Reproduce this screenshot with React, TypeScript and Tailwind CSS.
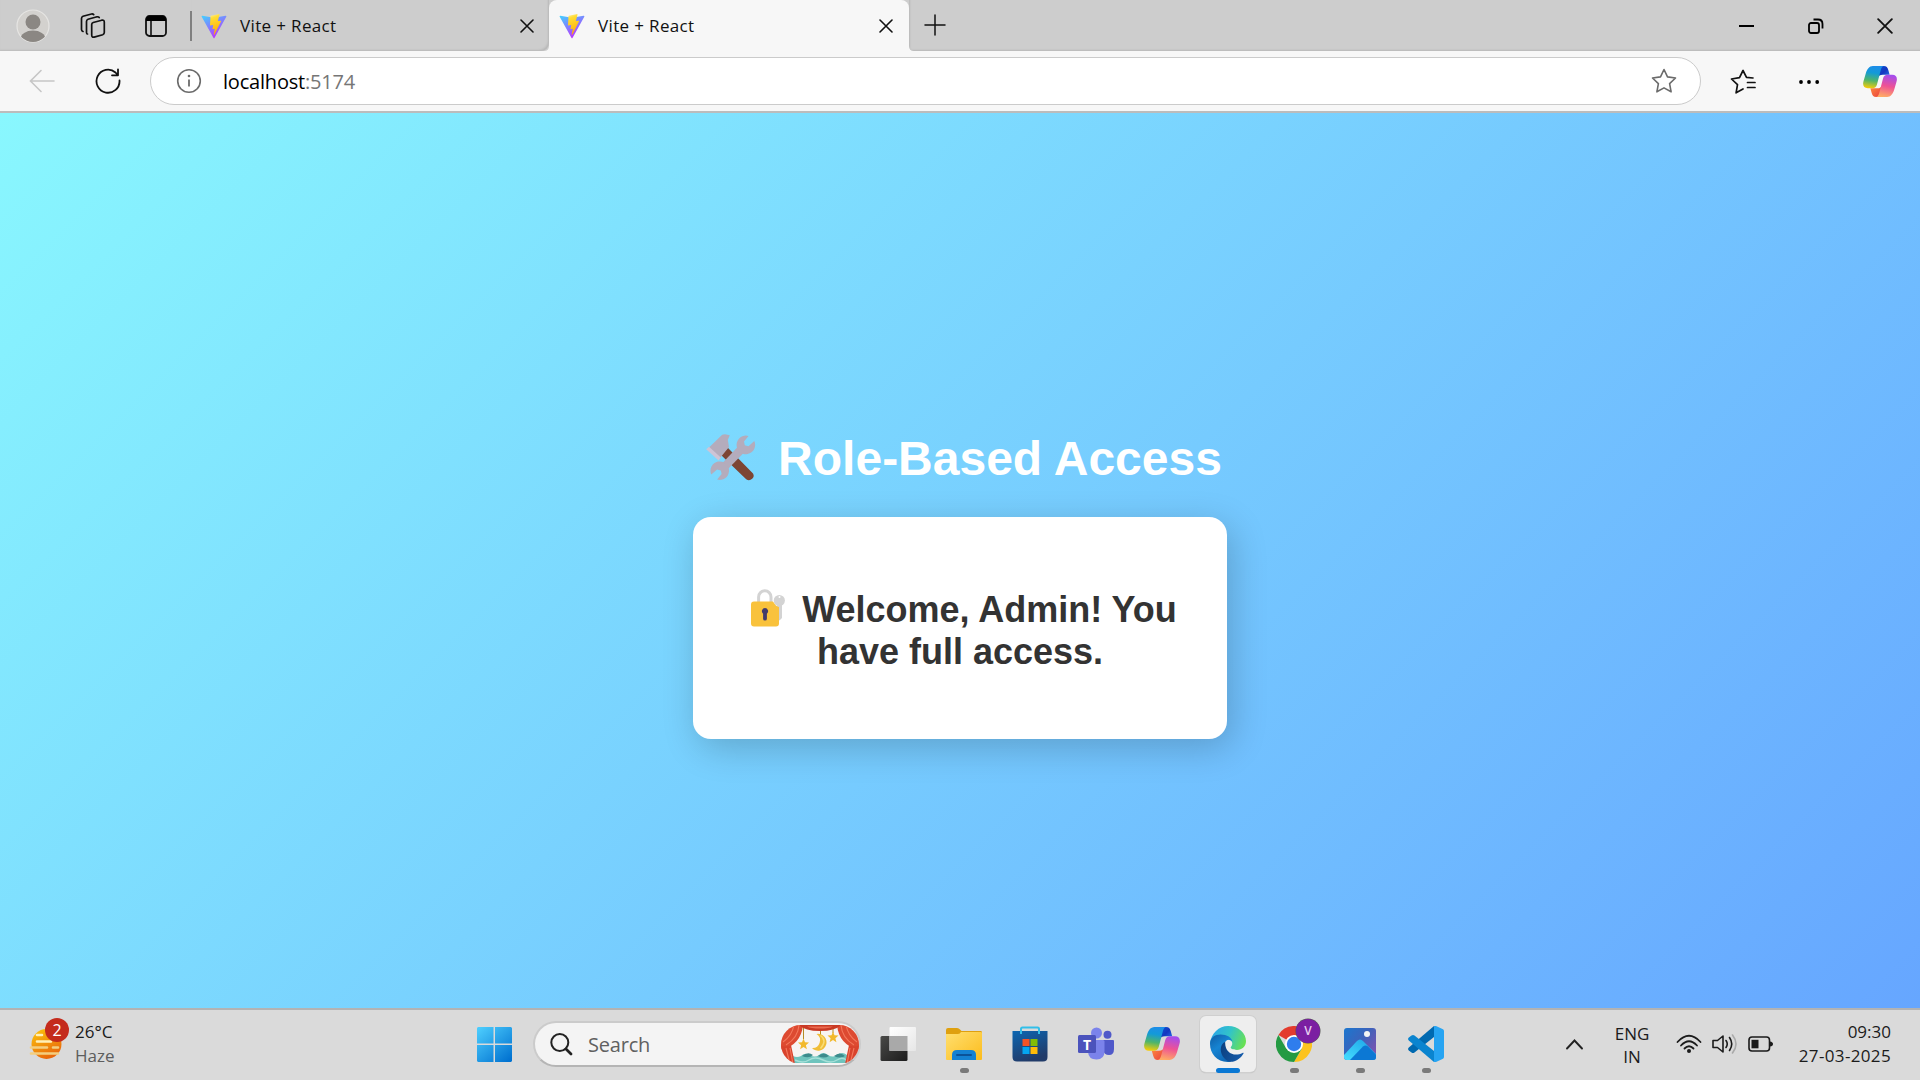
import React from "react";

const UI = "font-['Open_Sans','Noto_Sans',sans-serif]";

function Vite() {
  return (
    <svg width="26" height="26" viewBox="0 0 26 26" className="shrink-0">
      <defs>
        <linearGradient id="va" x1="0" y1="0" x2=".55" y2="1"><stop stopColor="#41d1ff" /><stop offset="1" stopColor="#bd34fe" /></linearGradient>
        <linearGradient id="vb" x1=".4" y1="0" x2=".6" y2="1"><stop stopColor="#ffea83" /><stop offset=".15" stopColor="#ffdd35" /><stop offset="1" stopColor="#ffa800" /></linearGradient>
      </defs>
      <path d="M25.3 3.8 13.6 24.8a.7.7 0 0 1-1.2 0L.7 3.8a.7.7 0 0 1 .7-1l11.6 2 11.5-2a.7.7 0 0 1 .8 1Z" fill="url(#va)" />
      <path d="m18.4 1-8.6 1.700a.4.4 0 0 0-.3.3L9 12a.4.4 0 0 0 .5.4l2.3-.5c.3-.1.5.2.4.4l-.7 3.5c0 .2.2.4.4.4l1.500-.5c.3 0 .5.2.4.4l-1.100 5.4c-.1.3.4.5.6.2l6.8-13.500a.4.4 0 0 0-.4-.5l-2.400.4a.4.4 0 0 1-.4-.4l1.600-5.900a.4.4 0 0 0-.1-.4Z" fill="url(#vb)" />
    </svg>
  );
}

function Copilot({ w, h }: { w: number; h: number }) {
  return (
    <svg width={w} height={h} viewBox="0 0 36 32" preserveAspectRatio="none" className="shrink-0">
      <defs>
        <linearGradient id="c1" x1=".5" y1="0" x2=".35" y2="1"><stop stopColor="#1d8de8" /><stop offset=".3" stopColor="#139ad8" /><stop offset=".65" stopColor="#4fb56a" /><stop offset="1" stopColor="#f5cc08" /></linearGradient>
        <linearGradient id="c2" x1=".6" y1="0" x2=".4" y2="1"><stop stopColor="#a44dee" /><stop offset=".5" stopColor="#ee5295" /><stop offset="1" stopColor="#ffab65" /></linearGradient>
        <linearGradient id="c3" x1="0" y1="0" x2="1" y2="1"><stop stopColor="#0b55d5" /><stop offset=".5" stopColor="#1436c0" /><stop offset="1" stopColor="#2a7cf0" /></linearGradient>
        <linearGradient id="c4" x1="0" y1="0" x2="1" y2="1"><stop stopColor="#ff8f3f" /><stop offset="1" stopColor="#e93e3e" /></linearGradient>
      </defs>
      <path d="M18 0h4c3 0 4 1.500 4.800 4.200L28.200 9H21c-3 0-4.500 1-5.300 3.500Z" fill="url(#c3)" />
      <path d="M18 32h-4c-3 0-4-1.500-4.800-4.200L7.800 23H15c3 0 4.500-1 5.300-3.500Z" fill="url(#c4)" />
      <path d="M22.500 0H10.500C6.500 0 4.300 3.500 3 7.500L.6 15.500C-.8 20 .8 23 5 23h5c2.600 0 4-1.200 4.800-3.800L18.600 5C19.400 2 20.300 0 22.500 0Z" fill="url(#c1)" />
      <path d="M13.500 32h12c4 0 6.200-3.500 7.500-7.500l2.400-8C36.800 12 35.200 9 31 9h-5c-2.600 0-4 1.200-4.800 3.800L17.400 27c-.8 3-1.700 5-3.900 5Z" fill="url(#c2)" />
    </svg>
  );
}

function Cross({ s }: { s: number }) {
  return (
    <svg width={s} height={s} viewBox="0 0 14 14" className="shrink-0"><path d="m1 1 12 12M13 1 1 13" stroke="#111" strokeWidth="1.600" strokeLinecap="round" /></svg>
  );
}

function TabBar() {
  return (
    <header className="flex h-[51px] shrink-0 bg-[#cdcdcd]">
      <div className="flex w-[192px] items-center pl-4 shadow-[inset_0_-2px_2px_-1px_#bcbcbc]">
        <svg width="34" height="34" viewBox="0 0 34 34" className="mt-px">
          <defs><clipPath id="av"><circle cx="17" cy="17" r="16" /></clipPath></defs>
          <circle cx="17" cy="17" r="16" fill="#d3d1ce" stroke="#e6e5e3" strokeWidth="1.200" />
          <g clipPath="url(#av)" fill="#8b8783"><circle cx="17" cy="13" r="7.500" /><ellipse cx="17" cy="30" rx="12.500" ry="8.500" /></g>
        </svg>
        <svg width="26" height="26" viewBox="0 0 26 26" fill="none" stroke="#111" strokeWidth="1.700" strokeLinecap="round" className="ml-[30px]">
          <path d="m13.200 9.500 8.500-2.300q2.600-.6 2.600 2v10.300q0 1.600-1.600 2.200l-8.500 2.400q-2.500.6-2.500-2V11.500q0-1.600 1.500-2Z" />
          <path d="M7.500 21q-1 0-1-1.500V8.500q0-1.600 1.500-2.200L17 3.800q1.500-.3 2.200.7" />
          <path d="M3 18.500q-1.500-.5-1.500-2v-11q0-1.500 1.500-2.200L11.500 1q1.500-.2 2.200.6" />
        </svg>
        <svg width="22" height="22" viewBox="0 0 22 22" className="ml-[39px]">
          <rect x="1" y="1" width="20" height="20" rx="3.500" fill="none" stroke="#111" strokeWidth="1.800" />
          <path d="M1 6V4.500A3.500 3.500 0 0 1 4.500 1h13A3.500 3.500 0 0 1 21 4.500V6Z" fill="#000" /><path d="M6 6v15" stroke="#111" strokeWidth="1.600" />
        </svg>
        <div className="ml-[23px] h-[30px] w-[2px] shrink-0 bg-[#808080]" />
      </div>
      <div className="flex w-[357px] items-center rounded-br-lg pl-[9px] pr-[15px] shadow-[inset_-2px_-2px_2px_-1px_#b8b8b8]">
        <Vite />
        <span className="ml-[13px] flex-1 text-[17px] leading-none tracking-[0.350px] text-[#111]">Vite + React</span>
        <Cross s={14} />
      </div>
      <div className="relative flex w-[360px] items-center rounded-t-lg bg-[#f7f7f7] pl-[10px] pr-[16px]">
        <Vite />
        <span className="ml-[13px] flex-1 text-[17px] leading-none tracking-[0.350px] text-[#111]">Vite + React</span>
        <Cross s={14} />
        <svg width="5" height="5" viewBox="0 0 5 5" className="absolute -left-[5px] bottom-0"><path d="M5 0v5H0q5 0 5-5" fill="#f7f7f7" /></svg>
        <svg width="5" height="5" viewBox="0 0 5 5" className="absolute -right-[5px] bottom-0"><path d="M0 0v5h5q-5 0-5-5" fill="#f7f7f7" /></svg>
      </div>
      <div className="flex flex-1 items-center pl-[15px] pr-[27px] shadow-[inset_2px_-2px_2px_-1px_#b8b8b8]">
        <svg width="22" height="22" viewBox="0 0 22 22" className="-mt-[2px]"><path d="M11 1v20M1 11h20" stroke="#111" strokeWidth="1.500" strokeLinecap="round" /></svg>
        <div className="flex-1" />
        <div className="mr-[54px] h-[2px] w-[15px] bg-black" />
        <svg width="16" height="16" viewBox="0 0 16 16" fill="none" stroke="#000" strokeWidth="1.800" className="mr-[53px]"><rect x="1" y="5" width="10" height="10" rx="2" /><path d="M5.500 1.500H10q4.500 0 4.500 4.500v4.500" /></svg>
        <Cross s={16} />
      </div>
    </header>
  );
}

function Toolbar() {
  return (
    <div className="flex h-[62px] shrink-0 items-center border-b-2 border-[#bcbcbc] bg-[#f7f7f7] pl-[29px] pr-[23px]">
      <svg width="26" height="24" viewBox="0 0 26 24" fill="none" stroke="#c6c6c6" strokeWidth="1.600" strokeLinecap="round" className="-mt-px"><path d="M25 12H1.500M12 1.500 1.500 12 12 22.500" /></svg>
      <svg width="26" height="26" viewBox="0 0 26 26" fill="none" stroke="#111" strokeWidth="1.800" strokeLinecap="round" strokeLinejoin="round" className="ml-10"><path d="M24.500 12.500A11.500 11.500 0 1 1 20.500 4.500L23 7.300M23 1.500v5.800h-6" /></svg>
      <div className="ml-[29px] flex h-12 w-[1551px] items-center rounded-full border border-[#cbcbcb] bg-white pl-[25px] pr-[23px]">
        <svg width="26" height="26" viewBox="0 0 26 26" fill="none" stroke="#6b6b6b" strokeWidth="1.600"><circle cx="13" cy="13" r="11.300" /><path d="M13 11.500v7" strokeWidth="1.800" /><circle cx="13" cy="8" r="1.300" fill="#6b6b6b" stroke="none" /></svg>
        <div className="ml-[21px] flex-1 pt-[2px] text-[20px] leading-none tracking-[-0.200px] text-black">localhost<span className="text-[#767676]">:5174</span></div>
        <svg width="26" height="26" viewBox="0 0 26 26" fill="none" stroke="#6b6b6b" strokeWidth="1.600" strokeLinejoin="round"><path d="m13 1.500 3.500 7.400 8 1.100-5.900 5.600 1.500 8.200-7.100-3.900-7.100 3.900 1.500-8.200L1.500 10l8-1.100Z" /></svg>
      </div>
      <svg width="26" height="26" viewBox="0 0 26 26" fill="none" stroke="#111" strokeWidth="1.700" strokeLinecap="round" strokeLinejoin="round" className="ml-[29px] mt-px"><path d="m23 9-6.500-.6L13 1.500 9.500 8.600 1.500 10l6 5.600-1.400 8.200L13 20M17.500 13.500H25M17.500 18.500H25" /></svg>
      <svg width="22" height="6" viewBox="0 0 22 6" className="ml-[42px] mt-px"><circle cx="3" cy="3" r="1.900" /><circle cx="11" cy="3" r="1.900" /><circle cx="19.200" cy="3" r="1.900" /></svg>
      <div className="ml-auto"><Copilot w={34} h={31} /></div>
    </div>
  );
}

function Tools() {
  const jaw = "M42.500 2 38 7.500 38.800 11.200 42.500 12.200 48.300 7A9.300 9.300 0 1 1 42.500 2Z";
  return (
    <svg width="50" height="50" viewBox="0 0 50 50" className="shrink-0">
      <path d="M21.800 13.700 47 39.500q1.800 3-.8 5.300-3 2.700-6 .4L15 21Z" fill="#7d4533" />
      <path d="M16.200.8 19 .2l4.800 1-2 4.500 1.200 7.200L12.800 25.500 3 13.500Z" fill="#b4acbc" />
      <path d="M3 12.800 14.800 23.500l-2.200 3L.2 15.300Z" fill="#cdc4d6" />
      <g fill="#b4acbc">
        <path d="M33.500 11 16 29.500 20.500 36.500 39.500 17Z" />
        <path d={jaw} /><path d={jaw} transform="rotate(180 26.800 23.800)" />
      </g>
    </svg>
  );
}

function LockKey() {
  return (
    <svg width="36" height="39" viewBox="0 0 36 39" className="shrink-0">
      <circle cx="29.300" cy="11.500" r="5.600" fill="#d3d3d3" /><path d="M27 14h5v15l-2.500 2.500-2.500-2Z" fill="#d3d3d3" /><circle cx="29.500" cy="8" r="1" fill="#fff" />
      <path d="M8.600 14V8a6.200 6.200 0 0 1 12.400 0V14" fill="none" stroke="#d3d3d3" strokeWidth="3" />
      <path d="M4 12.500H23q3 5 6 5.500v16.500q0 3-3 3H4q-3 0-3-3v-19q0-3 3-3Z" fill="#f9c23c" />
      <path d="M15 19a3.200 3.200 0 0 1 1.900 5.700v5a1.900 1.900 0 0 1-3.800 0v-5A3.200 3.200 0 0 1 15 19Z" fill="#433b6b" />
    </svg>
  );
}

function Page() {
  return (
    <main className="flex flex-1 flex-col items-center bg-[linear-gradient(135deg,#89f7fe,#66a6ff)] pt-[317px] font-['Liberation_Sans',Arial,sans-serif]">
      <h1 className="flex h-[58px] items-center pl-[8px] text-[48px] font-bold leading-[58px] text-white">
        <Tools /><span className="ml-[22px] whitespace-nowrap">Role-Based Access</span>
      </h1>
      <section className="mt-[29px] flex h-[222px] w-[534px] flex-col items-center rounded-[18px] bg-white pt-[72px] text-[36px] font-bold leading-[42px] text-[#333] shadow-[5px_9px_36px_rgba(0,0,0,0.2)]">
        <div className="flex h-[42px] items-center pl-[7px]"><div className="-mt-1"><LockKey /></div><span className="ml-[16px] whitespace-nowrap">Welcome, Admin! You</span></div>
        <div>have full access.</div>
      </section>
    </main>
  );
}

function Doodle() {
  const star = "m0-5.500 1.500 3.800 4 .3-3.100 2.600 1 4L0 3l-3.400 2.200 1-4-3.100-2.600 4-.3Z";
  return (
    <svg width="78" height="39" viewBox="0 0 78 39" className="shrink-0">
      <defs><clipPath id="dd"><rect width="78" height="39" rx="19.500" /></clipPath></defs>
      <g clipPath="url(#dd)">
        <rect width="78" height="39" fill="#f7f4f2" />
        <path d="M12 31q4 2 8 0 4-4 9-1 5 3 9 0 4-4 9 0 5 3 9 0 5-4 10 0v8H12Z" fill="#6fc4bd" />
        <path d="M21 31q6-5 11-1-4 4-11 1M37 31q6-5 11 0-5 3-11 0M53 31q6-5 11 0-5 3-11 0" fill="#3d8b8c" />
        <path d="M14 35q8 4 14 0t14 0 14 0 10 1" stroke="#a6e0d8" strokeWidth="1.500" fill="none" />
        <path d="M0 0h22q-2 20-22 25ZM78 0H56q2 20 22 25Z" fill="#dd4a31" />
        <path d="M0 20q4 3 10 0l4 19H0ZM78 20q-4 3-10 0l-4 19h14Z" fill="#d9432c" />
        <path d="M18 0h42q-6 6-21 6T18 0Z" fill="#c93a25" />
        <path d="M5 20Q17 13 18 0M2 17Q11 11 13 0M73 20Q61 13 60 0M76 17Q67 11 65 0M5 23l4 16M9 23l3 16M73 23l-4 16M69 23l-3 16" stroke="#f3785c" strokeWidth="1.100" fill="none" />
        <path d="M26 1.500h26q-4 2-13 2t-13-2" fill="#ec6a50" />
        <path d="M22.500 3v11M39.500 6v4M52 4v4" stroke="#b58b24" strokeWidth="1" />
        <path d="M35.500 9A8.400 8.400 0 1 1 31 23 7.600 7.600 0 0 0 35.500 9Z" fill="#f0bd36" />
        <path d="M39.500 10.500q7 5 0 13" stroke="#f9dc75" strokeWidth="1.500" fill="none" />
        <path d={star} transform="translate(22.500 19)" fill="#f2b92c" /><path d={star} transform="translate(52 12)" fill="#f2b92c" />
      </g>
    </svg>
  );
}

function Slot({ children, dot, active }: { children: React.ReactNode; dot?: boolean; active?: boolean }) {
  return (
    <div className={"relative flex h-[56px] w-[56px] shrink-0 items-center justify-center rounded-md " + (active ? "bg-[#eeeeee] shadow-[0_0_0_1px_#cfcfcf,0_1px_1px_#aaa]" : "")}>
      {children}
      {dot && <div className="absolute bottom-0 -mb-px h-[5px] w-[9px] rounded-full bg-[#7a7a7a]" />}
      {active && <div className="absolute bottom-0 -mb-px h-[5px] w-6 rounded-full bg-[#0a78d4]" />}
    </div>
  );
}

function Apps() {
  return (
    <div className="ml-[9px] flex gap-[10px]">
      <Slot>
        <svg width="36" height="36" viewBox="0 0 36 36">
          <defs><linearGradient id="tk" x2="1" y2="1"><stop stopColor="#4a4a48" /><stop offset="1" stopColor="#1c1c1c" /></linearGradient><linearGradient id="tw" x2="1" y2="1"><stop stopColor="#fff" /><stop offset="1" stopColor="#e6e6e6" /></linearGradient></defs>
          <rect x=".5" y="10" width="27" height="25" rx="1.500" fill="url(#tk)" /><rect x="9.500" y="1" width="26.500" height="24" rx="1" fill="url(#tw)" /><path d="M9.500 10h18v15h-18Z" fill="#a9a9a9" />
        </svg>
      </Slot>
      <Slot dot>
        <svg width="36" height="36" viewBox="0 0 36 36">
          <defs><linearGradient id="fo" x2="1" y2="1"><stop stopColor="#ffdf70" /><stop offset="1" stopColor="#fcbc1c" /></linearGradient></defs>
          <path d="M0 4q0-2 2-2h9q2 0 3 1.500L15.500 5H35q1 0 1 1.500V12H0Z" fill="#dfa00f" /><path d="M0 8h12q2 0 3-2h20q1 0 1 1v26q0 1-1 1H1q-1 0-1-1Z" fill="url(#fo)" />
          <path d="M6 34v-5q0-5 5-5h14q5 0 5 5v5Z" fill="#1481d2" /><path d="M11 29h14" stroke="#0b5298" strokeWidth="2" strokeLinecap="round" />
        </svg>
      </Slot>
      <Slot>
        <svg width="36" height="36" viewBox="0 0 36 36">
          <defs><linearGradient id="st" x2=".4" y2="1"><stop stopColor="#0c66b2" /><stop offset="1" stopColor="#213b69" /></linearGradient></defs>
          <path d="M9 7V3q0-1.500 1.500-1.500h15Q27 1.500 27 3v4" fill="none" stroke="#32bfe9" strokeWidth="2" /><path d="M.5 5h35v26q0 4.500-4.500 4.500H5Q.5 35.500.5 31Z" fill="url(#st)" /><path d="M9 5v3M27 5v3" stroke="#32bfe9" strokeWidth="2" />
          <path d="M10.500 13h7v7h-7Z" fill="#f35325" /><path d="M18.500 13h7v7h-7Z" fill="#81bc06" /><path d="M10.500 21h7v7h-7Z" fill="#05a6f0" /><path d="M18.500 21h7v7h-7Z" fill="#ffba08" />
        </svg>
      </Slot>
      <Slot>
        <svg width="36" height="36" viewBox="0 0 36 36">
          <circle cx="29.500" cy="8.700" r="4" fill="#5059c9" /><path d="M25 14h10q1 0 1 1v8q0 6-5 6t-6-5Z" fill="#5059c9" />
          <circle cx="18.500" cy="7" r="5.500" fill="#7b83eb" /><path d="M10 14h15q1.500 0 1.500 1.500V25q0 8.500-8 8.500T10 26Z" fill="#7b83eb" />
          <rect x="0" y="9" width="18" height="18" rx="1.500" fill="#4b53bc" /><text x="9" y="23.500" textAnchor="middle" fontSize="14" fontWeight="700" fill="#fff" fontFamily="Open Sans, sans-serif">T</text>
        </svg>
      </Slot>
      <Slot><div className="-mt-px"><Copilot w={36} h={33} /></div></Slot>
      <Slot active>
        <svg width="36" height="36" viewBox="0 0 36 36">
          <defs>
            <linearGradient id="e1" x1="0" y1=".3" x2="1" y2=".6"><stop stopColor="#2aa4ea" /><stop offset=".5" stopColor="#32c4c8" /><stop offset="1" stopColor="#69e152" /></linearGradient>
            <linearGradient id="e2" x2=".6" y2="1"><stop stopColor="#0f5da5" /><stop offset=".5" stopColor="#1684d2" /><stop offset="1" stopColor="#0f67b5" /></linearGradient>
            <linearGradient id="e3" x2="1" y2=".3"><stop stopColor="#0c3f7d" /><stop offset="1" stopColor="#1459a8" /></linearGradient>
          </defs>
          <path d="M0 18C1 7 9 0 18 0c11 0 18 7.500 18 15 0 5.500-4 9-9 9-4.500 0-6.800-1.600-6.200-2.900 2.700-2.800 1.700-7.400-2.800-7.400Z" fill="url(#e1)" />
          <path d="M0 18C0 11.500 5 8.500 10.500 8.500c6.500 0 11.500 3 12 7.500-1-2-4.500-3-6-1.500-6 5-3 16.500 6 19l-2 2.300C8 37.500 0 28 0 18Z" fill="url(#e2)" />
          <path d="M15.200 15.800C8 19 9.500 32 20 35.800c5 .5 10.500-3 13.500-8.300.3-.7-.3-1-1-.6-8.500 4.500-18-.5-17.300-11.100Z" fill="url(#e3)" />
        </svg>
      </Slot>
      <Slot dot>
        <svg width="36" height="36" viewBox="0 0 36 36">
          <path d="M18 18 2.400 9A18 18 0 0 1 33.600 9Z" fill="#e33b2e" /><path d="M18 9h15.600A18 18 0 0 1 18 36l7.800-13.500Z" fill="#fcc31e" /><path d="M2.400 9A18 18 0 0 0 18 36l7.800-13.500L18 26l-7.800-3.500Z" fill="#249a43" />
          <circle cx="18" cy="18" r="9" fill="#fff" /><circle cx="18" cy="18" r="7.200" fill="#2f7ded" />
        </svg>
        <div className="absolute right-[2px] top-[3px] flex h-6 w-6 items-center justify-center rounded-full bg-[#7b1fa2] text-[12px] font-semibold leading-none text-[#e7cdf0] shadow-[0_0_0_0.500px_#555]">V</div>
      </Slot>
      <Slot dot>
        <svg width="32" height="32" viewBox="0 0 32 32">
          <defs><linearGradient id="ph" x2="1" y2=".8"><stop stopColor="#1b77cf" /><stop offset=".5" stopColor="#3c63bb" /><stop offset="1" stopColor="#8152b0" /></linearGradient><linearGradient id="pm" x1="1" x2="0" y1="0" y2="1"><stop stopColor="#1aa1e6" /><stop offset="1" stopColor="#45ddff" /></linearGradient><clipPath id="pc"><rect width="32" height="32" rx="3" /></clipPath></defs>
          <g clipPath="url(#pc)"><rect width="32" height="32" fill="url(#ph)" /><path d="m0 27 13-14q3-3 6 0l13 13v6H0Z" fill="url(#pm)" /><path d="M6 32 19 18.500q2.500-2 5 0l8 8V32Z" fill="#0c78d4" /><circle cx="23" cy="6" r="3" fill="#f4f4f4" /></g>
        </svg>
      </Slot>
      <Slot dot>
        <svg width="36" height="36" viewBox="0 0 36 36">
          <path d="M26 0v11L6.500 26.500q-1.500 1-3 0L.800 24.500q-1.500-1.500 0-3Z" fill="#0069b0" /><path d="M26 36V25L6.500 9.500q-1.500-1-3 0L.8 11.500q-1.500 1.500 0 3Z" fill="#0a84cf" />
          <path d="M26 0q1-.5 2 0l7 3.300q1 .5 1 2v25.400q0 1.500-1 2L28 36q-1 .5-2 0Z" fill="#27a4f2" />
        </svg>
      </Slot>
    </div>
  );
}

function Taskbar() {
  return (
    <footer className={"flex h-[72px] shrink-0 items-center border-t-2 border-[#b3b3b3] bg-[#dadada] pb-[2px] text-[#1b1b1b] " + UI}>
      <div className="flex w-[477px] items-center pl-[27px]">
        <svg width="44" height="44" viewBox="0 0 44 44" className="-mt-[8px]">
          <defs><linearGradient id="sn" x2=".5" y2="1"><stop stopColor="#fcc80a" /><stop offset="1" stopColor="#e9680c" /></linearGradient></defs>
          <circle cx="19.500" cy="26" r="15" fill="url(#sn)" /><path d="M10 17h5M10 23.500h14" stroke="#fff0b8" strokeWidth="2.600" strokeLinecap="round" /><path d="M4 29.500h16M26 29.500h5M4 35.500h27" stroke="#f3ce80" strokeWidth="2.600" strokeLinecap="round" />
          <circle cx="30" cy="12" r="12" fill="#c42b1c" /><text x="30" y="17.500" textAnchor="middle" fontSize="16" fill="#fff" fontFamily="Open Sans, sans-serif">2</text>
        </svg>
        <div className="ml-1 text-[17px] leading-6"><div>26°C</div><div className="text-[#5d5d5d]">Haze</div></div>
      </div>
      <svg width="35" height="35" viewBox="0 0 35 35" className="shrink-0">
        <defs><linearGradient id="wg" gradientUnits="userSpaceOnUse" x1="0" y1="0" x2="30" y2="35"><stop stopColor="#4fd0ff" /><stop offset="1" stopColor="#0273d1" /></linearGradient></defs>
        <path d="M1 0h15.500v16.500H0V1ZM18 0h16l1 1v15.500H18ZM0 18h16.500v17H1l-1-1ZM18 18h17v16l-1 1H18Z" fill="url(#wg)" />
      </svg>
      <div className="ml-[21px] flex h-[46px] w-[328px] shrink-0 items-center rounded-full border-2 border-[#cbcbcb] border-b-[#b5b5b5] bg-[#f4f4f4] pl-[15px]">
        <svg width="23" height="23" viewBox="0 0 23 23" fill="none" stroke="#222" strokeLinecap="round"><circle cx="9.800" cy="9.500" r="8.500" strokeWidth="2" /><path d="m16 16 5 5" strokeWidth="2.800" /></svg>
        <span className="ml-[15px] flex-1 pt-px text-[20px] leading-none tracking-[-0.200px] text-[#606060]">Search</span>
        <Doodle />
      </div>
      <Apps />
      <div className="ml-auto flex items-center pr-[29px]">
        <svg width="17" height="11" viewBox="0 0 17 11" fill="none" stroke="#222" strokeWidth="1.900" strokeLinecap="round"><path d="m1 9.500 7.500-8 7.500 8" /></svg>
        <div className="ml-[30px] w-[38px] pt-[2px] text-center text-[17px] leading-[23px] tracking-[-0.100px]">ENG<br />IN</div>
        <svg width="26" height="20" viewBox="0 0 26 20" fill="none" stroke="#1b1b1b" strokeWidth="1.800" strokeLinecap="round" className="ml-[25px]"><path d="M1.500 8Q13-4.500 24.500 8M5 11.500q8-8.500 16 0M8.500 14.500q4.500-4.500 9 0" /><circle cx="13" cy="17" r="2" fill="#1b1b1b" stroke="none" /></svg>
        <svg width="26" height="22" viewBox="0 0 26 22" fill="none" stroke="#1b1b1b" strokeWidth="1.600" strokeLinecap="round" strokeLinejoin="round" className="ml-[10px]"><path d="M1 7.500h4.500L11 3v16l-5.500-4.500H1ZM14 7.500q2.500 3.500 0 7M17.500 4.500q4.500 6.500 0 13" /><path d="M20.500 2q7 9 0 18" stroke="#aaa" /></svg>
        <svg width="25" height="16" viewBox="0 0 25 16" className="ml-[10px]"><rect x="1" y="1" width="20.500" height="14" rx="3" fill="none" stroke="#1b1b1b" strokeWidth="1.600" /><rect x="3.500" y="3.800" width="7" height="8.500" fill="#1b1b1b" /><path d="M22 5.500q3 .5 3 2.500t-3 2.500Z" fill="#1b1b1b" /></svg>
        <div className="ml-[23px] flex w-[95px] flex-col items-end whitespace-nowrap text-[17px] leading-6"><span>09:30</span><span className="tracking-[0.350px]">27-03-2025</span></div>
      </div>
    </footer>
  );
}

export default function App() {
  return (
    <div className={"flex h-[1080px] w-[1920px] flex-col overflow-hidden " + UI}>
      <TabBar />
      <Toolbar />
      <Page />
      <Taskbar />
    </div>
  );
}
